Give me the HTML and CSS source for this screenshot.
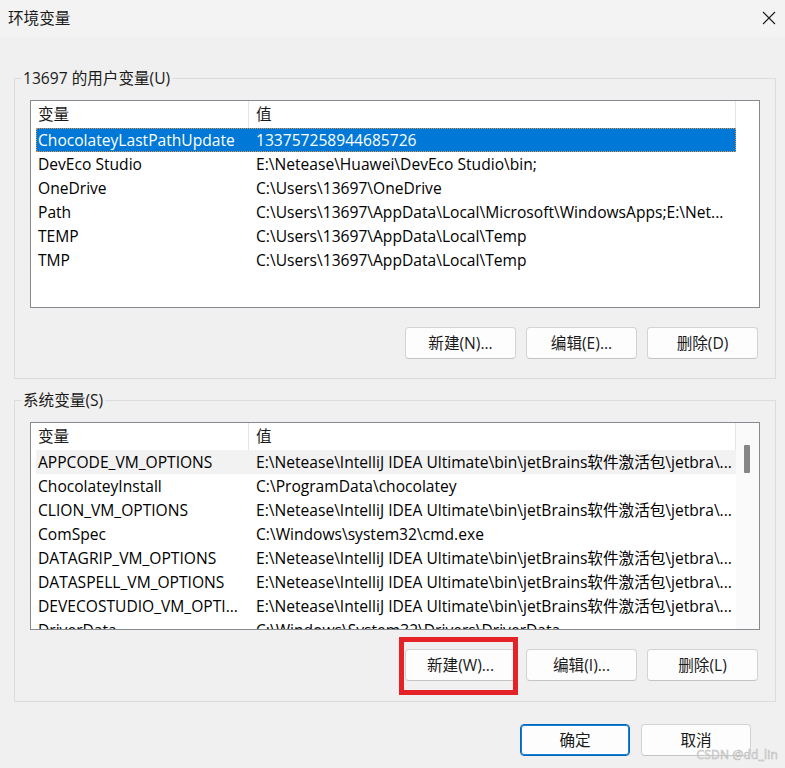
FILE: index.html
```html
<!DOCTYPE html>
<html>
<head>
<title>环境变量</title>
<meta charset="utf-8">
<link rel="stylesheet" href="styles.css">
</head>
<body>
<div class="window">

<div class="titlebar">
 <span class="title">环境变量</span>
 <svg class="close" width="14" height="14" viewBox="0 0 14 14"><path d="M1 1L13 13M13 1L1 13" stroke="#1a1a1a" stroke-width="1.1" fill="none"/></svg>
</div>

<fieldset class="group">
 <legend>13697 的用户变量(U)</legend>
 <div class="list">
  <div class="table">
   <div class="head"><span class="c1">变量</span><span class="c2">值</span></div>
   <div class="row sel"><span class="c1">ChocolateyLastPathUpdate</span><span class="c2">133757258944685726</span></div>
   <div class="row"><span class="c1">DevEco Studio</span><span class="c2">E:\Netease\Huawei\DevEco Studio\bin;</span></div>
   <div class="row"><span class="c1">OneDrive</span><span class="c2">C:\Users\13697\OneDrive</span></div>
   <div class="row"><span class="c1">Path</span><span class="c2">C:\Users\13697\AppData\Local\Microsoft\WindowsApps;E:\Net...</span></div>
   <div class="row"><span class="c1">TEMP</span><span class="c2">C:\Users\13697\AppData\Local\Temp</span></div>
   <div class="row"><span class="c1">TMP</span><span class="c2">C:\Users\13697\AppData\Local\Temp</span></div>
  </div>
  <div class="gutter"></div>
 </div>
 <div class="buttons">
  <button>新建(N)...</button>
  <button>编辑(E)...</button>
  <button>删除(D)</button>
 </div>
</fieldset>

<fieldset class="group sys">
 <legend>系统变量(S)</legend>
 <div class="list">
  <div class="table">
   <div class="head"><span class="c1">变量</span><span class="c2">值</span></div>
   <div class="row hover"><span class="c1">APPCODE_VM_OPTIONS</span><span class="c2">E:\Netease\IntelliJ IDEA Ultimate\bin\jetBrains软件激活包\jetbra\...</span></div>
   <div class="row"><span class="c1">ChocolateyInstall</span><span class="c2">C:\ProgramData\chocolatey</span></div>
   <div class="row"><span class="c1">CLION_VM_OPTIONS</span><span class="c2">E:\Netease\IntelliJ IDEA Ultimate\bin\jetBrains软件激活包\jetbra\...</span></div>
   <div class="row"><span class="c1">ComSpec</span><span class="c2">C:\Windows\system32\cmd.exe</span></div>
   <div class="row"><span class="c1">DATAGRIP_VM_OPTIONS</span><span class="c2">E:\Netease\IntelliJ IDEA Ultimate\bin\jetBrains软件激活包\jetbra\...</span></div>
   <div class="row"><span class="c1">DATASPELL_VM_OPTIONS</span><span class="c2">E:\Netease\IntelliJ IDEA Ultimate\bin\jetBrains软件激活包\jetbra\...</span></div>
   <div class="row"><span class="c1">DEVECOSTUDIO_VM_OPTI...</span><span class="c2">E:\Netease\IntelliJ IDEA Ultimate\bin\jetBrains软件激活包\jetbra\...</span></div>
   <div class="row"><span class="c1">DriverData</span><span class="c2">C:\Windows\System32\Drivers\DriverData</span></div>
  </div>
  <div class="gutter scroll"><span class="thumb"></span></div>
 </div>
 <div class="buttons">
  <span class="marked"><button>新建(W)...</button></span>
  <button>编辑(I)...</button>
  <button>删除(L)</button>
 </div>
</fieldset>

<div class="footer">
 <button class="default">确定</button>
 <button>取消</button>
</div>

<div class="watermark">CSDN @dd_lin</div>
</div>
</body>
</html>
```

FILE: styles.css
```css
html, body {
 margin:0;
 padding:0;
 background:#f0f0f0;
 overflow:hidden;
}
body {
 font-family:"Open Sans", "Noto Sans CJK SC", sans-serif;
 font-size:15.6px;
 color:#1a1a1a;
}
.window {
 position:relative;
 width:785px;
 height:768px;
}
.titlebar {
 height:37px;
 background:#f3f3f3;
 display:flex;
 align-items:center;
 justify-content:space-between;
 padding:0 9px 0 8px;
 box-sizing:border-box;
}
.title {line-height:20px; margin-top:-2px;}
.close {display:block; margin-top:-1px;}

.group {
 margin:31px 9px 0 14px;
 padding:12px 15px 19px 15px;
 border:1px solid #dcdcdc;
 min-width:0;
}
.group.sys {margin-top:11px; padding-bottom:20px;}
.group legend {
 margin-left:-9px;
 padding:0 2px;
 line-height:20px;
}

.list {
 display:flex;
 height:208px;
 box-sizing:border-box;
 border:1px solid #858a91;
 background:#fff;
 overflow:hidden;
}
.table {
 width:705px;
 flex:none;
 overflow:hidden;
}
.gutter {flex:1;}
.gutter.scroll {
 background:#fafafa;
 position:relative;
}
.thumb {
 position:absolute;
 left:8px;
 top:22px;
 width:6px;
 height:28px;
 border-radius:1px;
 background:#868686;
}

.head {
 display:grid;
 grid-template-columns:218px 1fr;
 height:27px;
 line-height:27px;
 color:#1a1a1a;
}
.head span {
 border-right:1px solid #e5e5e5;
 padding-left:7px;
}
.row {
 display:grid;
 grid-template-columns:212px 1fr;
 height:24px;
 line-height:24px;
 margin-left:5px;
 color:#000;
}
.row span {
 white-space:nowrap;
 overflow:hidden;
}
.row .c1 {padding-left:2px;}
.row .c2 {padding-left:8px;}
.row.sel {
 background:#0078d7;
 color:#fff;
 outline:1px dotted #d9964a;
 outline-offset:-1px;
}
.row.hover {background:#f2f2f2;}

.buttons {
 display:flex;
 justify-content:flex-end;
 gap:10px;
 margin-top:19px;
 padding-right:2px;
}
button {
 width:111px;
 height:32px;
 box-sizing:border-box;
 border:1px solid #d3d3d3;
 border-bottom-color:#c4c4c4;
 border-radius:4px;
 background:#fdfdfd;
 font-family:inherit;
 font-size:15.6px;
 color:#1a1a1a;
 padding:0 0 2px;
}
.marked {
 position:relative;
 display:block;
}
.marked button {display:block;}
.marked::after {
 content:"";
 position:absolute;
 left:-6px;
 top:-12px;
 width:119px;
 height:58px;
 box-sizing:border-box;
 border:5px solid #e52228;
}

.footer {
 display:flex;
 justify-content:flex-end;
 gap:11px;
 margin-top:22px;
 padding-right:34px;
}
.footer button {width:110px;}
.footer button.default {
 border:1px solid #0067c0;
 box-shadow:inset 0 0 0 1px #1a7fd0;
}

.watermark {
 position:absolute;
 right:7px;
 bottom:5px;
 font-size:12px;
 color:#ececec;
 -webkit-text-stroke:0.5px #b8b8b8;
 letter-spacing:0.2px;
}
```
